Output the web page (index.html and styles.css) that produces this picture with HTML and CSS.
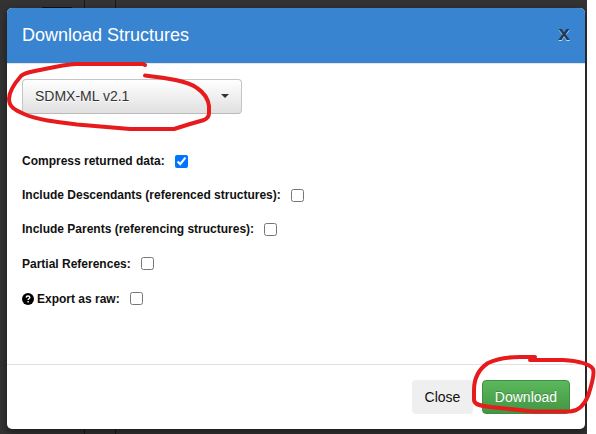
FILE: index.html
```html
<!DOCTYPE html>
<html lang="en">
<head>
<meta charset="utf-8">
<title>Download Structures</title>
<link rel="stylesheet" href="styles.css">
</head>
<body>
<div class="backdrop">
  <section class="dialog" role="dialog" aria-labelledby="title">
    <header class="header">
      <h1 class="title" id="title">Download Structures</h1>
      <button class="dismiss" type="button">x</button>
    </header>
    <main class="content">
      <button class="select" type="button"><span>SDMX-ML v2.1</span><i class="caret"></i></button>
      <div class="options">
        <label class="option"><span>Compress returned data:</span><input type="checkbox" checked></label>
        <label class="option"><span>Include Descendants (referenced structures):</span><input type="checkbox"></label>
        <label class="option"><span>Include Parents (referencing structures):</span><input type="checkbox"></label>
        <label class="option"><span>Partial References:</span><input type="checkbox"></label>
        <label class="option"><svg class="help" viewBox="0 0 12 12"><circle cx="6" cy="6" r="6"/><path d="M4.200 4.600C4.300 2.400 7.800 2.500 7.800 4.500C7.800 5.800 6.100 5.700 6.100 7M6.100 8v1.400"/></svg><span>Export as raw:</span><input type="checkbox"></label>
      </div>
    </main>
    <footer class="footer">
      <button class="button close" type="button">Close</button>
      <button class="button download" type="button">Download</button>
    </footer>
  </section>
</div>
<svg class="marks" viewBox="0 0 596 434">
  <path d="M145 65L143 64H76C62 65 50 68 40 70C31 72 25 72 21 76C14 84 9 92 9 99C9 107 15 110 24 114C38 120 55 122 77 124.500L130 129H174L190 124L204 120Q209 118 209 113V106C208 98 203 92 197 88C188 81 166 78 145 75.500"/>
  <path d="M535 357H520C507 357 496 359 488 363C479 369 474 378 474 390V400C474 405 482 406 490 407L533 411.500H570C580 411 585 403 588 396C591 387 595 374 593 369C590 364 578 361 563 360H530"/>
</svg>
</body>
</html>
```
FILE: styles.css
```css
* { box-sizing: border-box; }
body {
  margin: 0;
  width: 596px;
  height: 434px;
  overflow: hidden;
  background: #fff;
  font-family: "Liberation Sans", Arial, sans-serif;
}
.backdrop {
  width: 587px;
  height: 434px;
  padding: 8px 2px 5px 7px;
  overflow: hidden;
  background:
    linear-gradient(#181818, #181818) 84px 0 / 1px 100% no-repeat,
    linear-gradient(#181818, #181818) 115px 0 / 1px 100% no-repeat,
    linear-gradient(#111, #111) 42px 7px / 30px 1px no-repeat,
    #333;
}
.dialog {
  display: flex;
  flex-direction: column;
  height: 421px;
  border-radius: 5px;
  overflow: hidden;
  background: #fff;
  box-shadow: 0 3px 9px rgba(0, 0, 0, .5);
}
button { margin: 0; font-family: inherit; }
.header {
  display: flex;
  align-items: center;
  justify-content: space-between;
  height: 56px;
  padding: 0 15px 2px;
  background: #3884d1;
  border-bottom: 1px solid #e5e5e5;
}
.title {
  margin: 0;
  color: #fff;
  font-size: 18px;
  font-weight: 400;
  line-height: 26px;
}
.dismiss {
  padding: 0 0 4px;
  border: 0;
  background: none;
  color: #1d3b58;
  font-size: 21px;
  font-weight: 700;
  line-height: 20px;
  text-shadow: 0 1px 0 #c4dbf1;
}
.content { flex: 1; padding: 15px; }
.select {
  display: flex;
  align-items: center;
  justify-content: space-between;
  width: 220px;
  height: 35px;
  padding: 0 12px 1px;
  border: 1px solid #c5c5c5;
  border-bottom-color: #bbb;
  border-radius: 4px;
  background: linear-gradient(#fff, #e0e0e0);
  color: #333;
  font-size: 14px;
  text-shadow: 0 1px 0 #fff;
}
.caret {
  border: 4px solid transparent;
  border-top-color: #333;
  border-bottom: 0;
}
.options {
  display: grid;
  grid-auto-rows: 34.2px;
  margin-top: 30px;
}
.option {
  display: flex;
  align-items: center;
  font-size: 12px;
  font-weight: 700;
  color: #111;
  white-space: nowrap;
}
.option:last-child { padding-top: 2px; }
.option input { width: 13px; height: 13px; margin: 0 0 0 10px; accent-color: #0075ff; }
.help { width: 12px; height: 12px; margin-right: 3px; }
.help path { fill: none; stroke: #fff; stroke-width: 1.4; }
.footer {
  display: flex;
  justify-content: flex-end;
  gap: 9px;
  height: 65px;
  padding: 15px;
  border-top: 1px solid #e1e1e1;
}
.button {
  height: 34px;
  padding: 0;
  border: 0;
  border-radius: 4px;
  font-size: 14px;
}
.close { width: 61px; background: #efefef; color: #111; }
.download {
  width: 88px;
  border: 1px solid #3e8f3e;
  background: linear-gradient(#5cb85c, #429643);
  color: #fff;
  text-shadow: 0 -1px 0 rgba(0, 0, 0, .2);
}
.marks {
  position: absolute;
  top: 0;
  left: 0;
  width: 596px;
  height: 434px;
  pointer-events: none;
}
.marks path {
  fill: none;
  stroke: #e71b1d;
  stroke-width: 4;
  stroke-linecap: round;
  stroke-linejoin: round;
}
```
